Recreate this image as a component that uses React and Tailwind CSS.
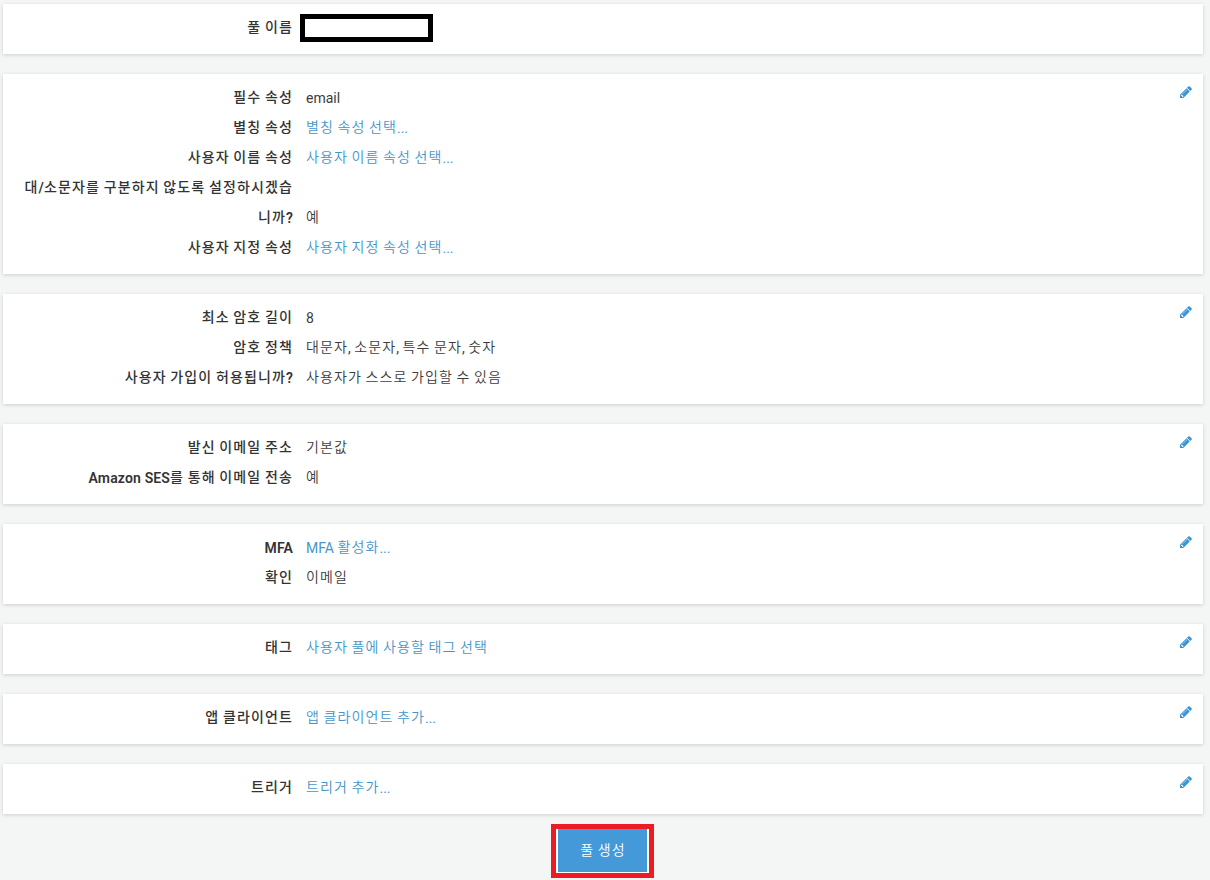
const sections = [
    {
        id: 'name',
        editable: false,
        rows: [{ label: '풀 이름', type: 'blank' }]
    },
    {
        id: 'attributes',
        editable: true,
        rows: [
            { label: '필수 속성', value: 'email' },
            { label: '별칭 속성', value: '별칭 속성 선택...', type: 'link' },
            { label: '사용자 이름 속성', value: '사용자 이름 속성 선택...', type: 'link' },
            { label: '대/소문자를 구분하지 않도록 설정하시겠습', label2: '니까?', value: '예' },
            { label: '사용자 지정 속성', value: '사용자 지정 속성 선택...', type: 'link' }
        ]
    },
    {
        id: 'policies',
        editable: true,
        rows: [
            { label: '최소 암호 길이', value: '8' },
            { label: '암호 정책', value: '대문자, 소문자, 특수 문자, 숫자' },
            { label: '사용자 가입이 허용됩니까?', value: '사용자가 스스로 가입할 수 있음' }
        ]
    },
    {
        id: 'email',
        editable: true,
        rows: [
            { label: '발신 이메일 주소', value: '기본값' },
            { label: 'Amazon SES를 통해 이메일 전송', value: '예' }
        ]
    },
    {
        id: 'mfa',
        editable: true,
        rows: [
            { label: 'MFA', value: 'MFA 활성화...', type: 'link' },
            { label: '확인', value: '이메일' }
        ]
    },
    {
        id: 'tags',
        editable: true,
        rows: [{ label: '태그', value: '사용자 풀에 사용할 태그 선택', type: 'link' }]
    },
    {
        id: 'clients',
        editable: true,
        rows: [{ label: '앱 클라이언트', value: '앱 클라이언트 추가...', type: 'link' }]
    },
    {
        id: 'triggers',
        editable: true,
        rows: [{ label: '트리거', value: '트리거 추가...', type: 'link' }]
    }
];

// Hangul is set a bit wider than the latin text around it
function Text({ children, bold }) {
    return children.split(/([가-힣]+)/).map((part, i) => {
        if (i % 2 === 0) return part;
        return (
            <span
                key={i}
                className={bold
                    ? "align-[1px] leading-none font-medium tracking-[1.12px]"
                    : "align-[1px] leading-none font-[350] tracking-[1.12px]"}
            >
                {part}
            </span>
        );
    });
}

function PencilIcon() {
    return (
        <svg width="14" height="14" viewBox="0 0 1792 1792" fill="currentColor">
            <path d="M491 1536l91-91-235-235-91 91v107h128v128h107zm523-928q0-22-22-22-10 0-17 7l-542 542q-7 7-7 17 0 22 22 22 10 0 17-7l542-542q7-7 7-17zm-54-192l416 416-832 832h-416v-416zm683 96q0 53-37 90l-166 166-416-416 166-165q36-38 90-38 53 0 91 38l235 234q37 39 37 91z" />
        </svg>
    );
}

function Value({ row }) {
    if (row.type === 'blank') {
        return <div className="-ml-[6px] h-7 w-[133px] border-[5px] border-black bg-white" />;
    }
    if (row.type === 'link') {
        return <a href="#" className="text-[#4695ca]"><Text>{row.value}</Text></a>;
    }
    return <span className="text-[#3c3c3c]"><Text>{row.value}</Text></span>;
}

function Section({ section }) {
    return (
        <section className="flex items-start justify-between bg-white pt-[9px] pb-[11px] shadow-[0_1px_4px_rgba(0,0,0,0.16)]">
            <div>
                {section.rows.map((row) => (
                    <div key={row.label} className="flex items-end">
                        <div className="w-[290px] text-right font-semibold tracking-[0.15px] whitespace-nowrap">
                            <div className="h-[30px]"><Text bold>{row.label}</Text></div>
                            {row.label2 && <div className="h-[30px]"><Text bold>{row.label2}</Text></div>}
                        </div>
                        <div className="ml-[13px] flex h-[30px] items-center whitespace-nowrap">
                            <Value row={row} />
                        </div>
                    </div>
                ))}
            </div>
            {section.editable && (
                <button type="button" className="mt-[2px] mr-[10px] text-[#3b93d3]">
                    <PencilIcon />
                </button>
            )}
        </section>
    );
}

function App() {
    return (
        <div className="h-[880px] overflow-hidden bg-[#f4f6f6] pt-1 pr-[7px] pl-[3px] font-[Roboto,'Noto_Sans_CJK_KR',sans-serif] text-[14px] leading-[30px] text-[#333]">
            <div className="flex flex-col gap-5">
                {sections.map((section) => (
                    <Section key={section.id} section={section} />
                ))}
            </div>
            <div className="mt-[10px] mr-[2px] flex justify-center">
                <div className="border-[5px] border-[#ed1c24] bg-white px-[2px] pb-px">
                    <button type="button" className="block h-[43px] w-[89px] bg-[#4499d8] pl-[2px] text-white">
                        <Text>풀 생성</Text>
                    </button>
                </div>
            </div>
        </div>
    );
}

export default App;
